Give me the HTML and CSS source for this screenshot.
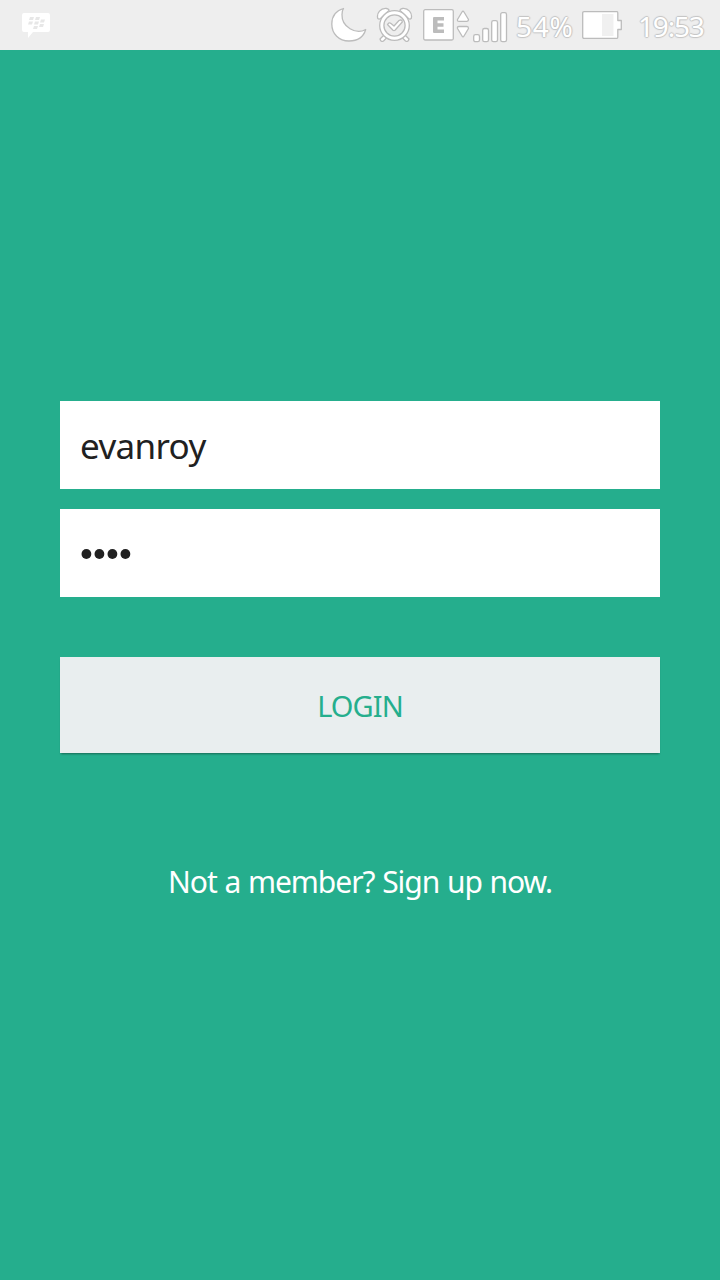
FILE: index.html
```html
<!DOCTYPE html>
<html lang="en">
<head>
<meta charset="utf-8">
<title>Login</title>
<link rel="stylesheet" href="styles.css">
</head>
<body>
<header class="status">
  <svg class="bbm" width="28" height="26" viewBox="0 0 28 26">
    <path fill="#fff" d="M2 0H26Q28 0 28 2V17Q28 19 26 19H11L6 25V19H2Q0 19 0 17V2Q0 0 2 0Z"/>
    <g fill="#e7e7e7"><path d="M8 4h4l-1 3H7zM14 4h4l-1 3h-4zM7 8.500h4l-1 3H6zM13 8.500h4l-1 3h-4zM19 6.500h4l-1 3h-4zM18 11h4l-1 3h-4zM12 13h4l-1 3h-4z"/></g>
  </svg>
  <div class="system">
    <svg class="moon" width="36" height="36" viewBox="0 0 36 36"><path class="line" d="M12.500 1.500C4 4 .8 10 .8 17C.8 27 8 34 18 34C26 34 32.500 30 34.700 22.500C25 28 10.500 20 11 7.500C11 5 11.500 3 12.500 1.500Z"/></svg>
    <svg class="alarm" width="37" height="36" viewBox="0 0 37 36">
      <path class="line" d="M1.800 11.500C.2 6 5 .8 10.500 1.500C12.500 1.800 13.300 3 13 3.500L4.500 11.500Q3 12.600 1.800 11.500ZM35.200 11.500C36.800 6 32 .8 26.500 1.500C24.500 1.800 23.700 3 24 3.500L32.500 11.500Q34 12.600 35.200 11.500Z"/>
      <path class="line" d="M8 28L4 32Q5 35.500 7.500 34L11 30.500ZM29 28L33 32Q32 35.500 29.500 34L26 30.500Z"/>
      <circle class="line" cx="18.500" cy="18.500" r="14.800"/>
      <circle cx="18.500" cy="18.500" r="10.600" fill="#eee" stroke="#bcbcbc" stroke-width="1.300"/>
      <path class="line" d="M11.500 17.500Q13 14.800 15 16.500L18 19L23 13.500Q26 12 26.300 15L19 23.300Q18 24 17 23.300Z"/>
    </svg>
    <svg class="edge" width="31" height="32" viewBox="0 0 31 32"><rect class="line" x=".7" y=".7" width="29.600" height="30.300" rx="1.500"/><path fill="#bcbcbc" d="M11 8H21V11.500H14.500V14.200H20.500V17.700H14.500V20.500H21V24H11Q10 24 10 23V9Q10 8 11 8Z"/></svg>
    <svg class="arrows" width="14" height="30" viewBox="0 0 14 30"><path class="line" d="M6 2Q7 .5 8 2L12.500 9.500Q12.500 11.300 11 11.300H3Q1 11.300 1.500 9.500ZM6 26Q7 27.700 8 26L12.500 18.500Q12.500 16.500 11 16.500H3Q1 16.500 1.500 18.500Z"/></svg>
    <svg class="signal" width="35" height="31" viewBox="0 0 35 31"><g class="line"><rect x=".7" y="22.700" width="5.800" height="7" rx="1.800"/><rect x="9.700" y="16.500" width="5.800" height="13.200" rx="1.800"/><rect x="18.700" y="8.700" width="5.800" height="21" rx="1.800"/><rect x="27.700" y=".7" width="5.800" height="29" rx="1.800"/></g></svg>
    <span class="label percent">54%</span>
    <svg class="battery" width="41" height="28" viewBox="0 0 41 28"><path class="line" d="M2 .7H35Q35.800 .7 35.800 2V9.500H39.300V18.500H35.800V26Q35.800 27.300 35 27.300H2Q.7 27.300 .7 26V2Q.7 .7 2 .7Z"/><path fill="#f0f0f0" d="M20 3H31.500V25H20Z"/></svg>
    <span class="label clock">19:53</span>
  </div>
</header>
<main class="form">
  <div class="field"><span class="username">evanroy</span></div>
  <div class="field password"><svg width="52" height="12" viewBox="0 0 52 12" fill="#212121"><circle cx="6.400" cy="6" r="4.900"/><circle cx="19.400" cy="6" r="4.900"/><circle cx="32.400" cy="6" r="4.900"/><circle cx="45.400" cy="6" r="4.900"/></svg></div>
  <div class="button"><span class="login">LOGIN</span></div>
  <div class="signup"><span class="signup-text">Not a member? Sign up now.</span></div>
</main>
</body>
</html>
```
FILE: styles.css
```css
* { box-sizing: border-box; }
body {
  margin: 0;
  height: 1280px;
  background: #25ae8d;
  font-family: "Noto Sans", sans-serif;
  overflow: hidden;
}
svg { display: block; flex: none; }
.status {
  height: 50px;
  background: #eee;
  display: flex;
  justify-content: space-between;
  align-items: flex-start;
  padding: 0 15px 0 22px;
}
.bbm { margin-top: 13px; }
.system { display: flex; align-items: flex-start; }
.line { fill: #fff; stroke: #bcbcbc; stroke-width: 1.3; stroke-linejoin: round; }
.moon { margin: 7px 9px 0 0; }
.alarm { margin: 7px 10px 0 0; }
.edge { margin: 9px 2px 0 0; }
.arrows { margin: 10px 3px 0 0; }
.signal { margin: 12px 8px 0 0; }
.battery { margin: 11px 15px 0 0; }
.label {
  flex: none;
  height: 50px;
  line-height: 52px;
  font-size: 28px;
  font-weight: 400;
  color: #fff;
  white-space: nowrap;
  text-shadow: 1px 0 1px #c4c4c4, -1px 0 1px #c4c4c4, 0 1px 1px #c4c4c4, 0 -1px 1px #c4c4c4;
}
.percent { width: 66px; letter-spacing: 0.7px; }
.clock { width: 67px; letter-spacing: -1.2px; }
.form { padding: 351px 60px 0; }
.field {
  height: 88px;
  background: #fff;
  padding: 2px 0 0 20px;
  display: flex;
  align-items: center;
  color: #212121;
}
.username { font-size: 35px; line-height: 48px; letter-spacing: -0.65px; }
.password { margin-top: 20px; }
.button {
  margin-top: 60px;
  height: 96px;
  display: flex;
  align-items: center;
  justify-content: center;
  background: #e9eeef;
  color: #25ae8d;
  box-shadow: 0 2px 2px -1px rgba(0, 0, 0, .4);
}
.login { font-size: 29px; letter-spacing: -0.9px; }
.signup {
  margin-top: 109px;
  text-align: center;
  color: #fff;
  font-size: 30px;
  line-height: 40px;
  letter-spacing: -1.05px;
  word-spacing: 1px;
  white-space: nowrap;
}
```
